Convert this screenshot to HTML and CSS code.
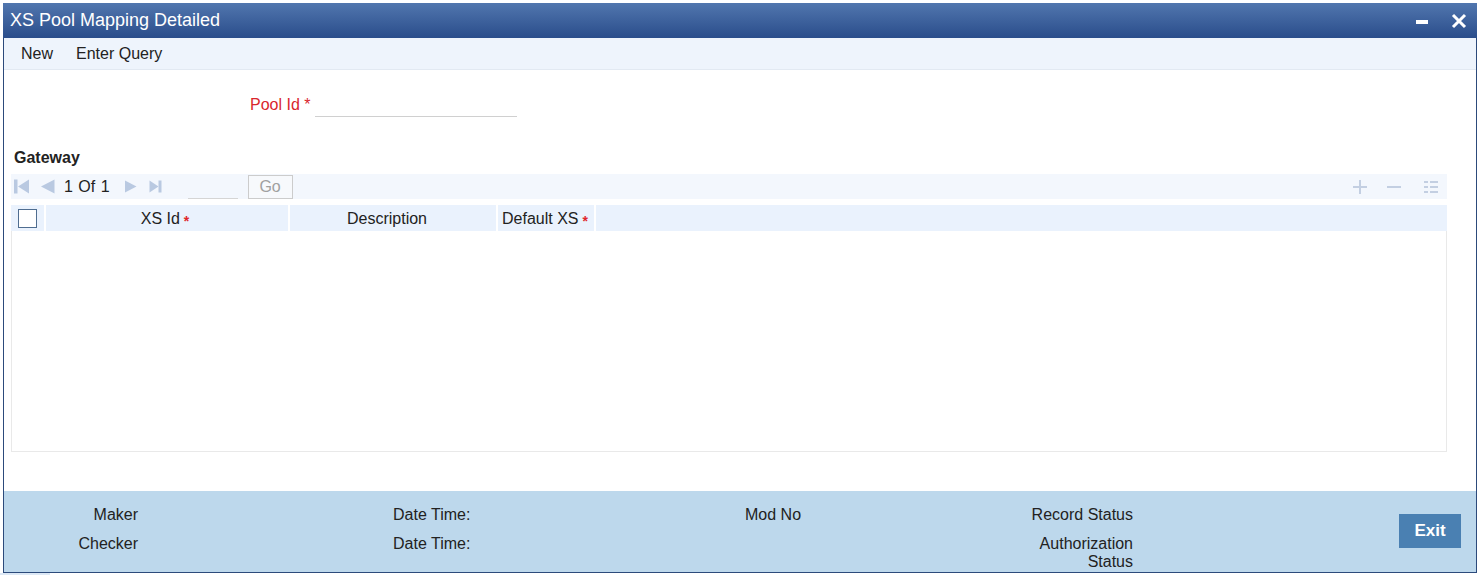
FILE: index.html
```html
<!DOCTYPE html>
<html>
<head>
<meta charset="utf-8">
<link rel="stylesheet" href="styles.css">
</head>
<body>
<div class="window">
  <div class="titlebar">
    <span class="title">XS Pool Mapping Detailed</span>
    <div class="winctl">
      <svg class="ic-min" width="14" height="14" viewBox="0 0 14 14"><rect x="1" y="6" width="12" height="4" fill="#fff"/></svg>
      <svg class="ic-close" width="16" height="16" viewBox="0 0 16 16"><path d="M2 2 L14 14 M14 2 L2 14" stroke="#fff" stroke-width="3"/></svg>
    </div>
  </div>
  <div class="toolbar">
    <span class="tb-item">New</span>
    <span class="tb-item">Enter Query</span>
  </div>
  <div class="main">
    <div class="pool-row">
      <label class="req-label">Pool Id <span class="star">*</span></label>
      <div class="line-input"></div>
    </div>
    <div class="section-title">Gateway</div>
    <div class="grid">
      <div class="pager">
        <div class="pager-left">
          <svg width="15" height="15" viewBox="0 0 15 15"><rect x="0" y="0.5" width="3.5" height="14" fill="#b9c9e1"/><path d="M15 0.5 L4 7.5 L15 14.5 Z" fill="#b9c9e1"/></svg>
          <svg class="gap-l" width="15" height="15" viewBox="0 0 15 15"><path d="M14.5 0.5 L1 7.5 L14.5 14.5 Z" fill="#b9c9e1"/></svg>
          <span class="pg-text">1 Of 1</span>
          <svg class="gap-r" width="13" height="15" viewBox="0 0 13 15"><path d="M1 1.5 L12.5 7.5 L1 13.5 Z" fill="#b9c9e1"/></svg>
          <svg class="gap-r2" width="13" height="15" viewBox="0 0 13 15"><path d="M0.5 1.5 L9.5 7.5 L0.5 13.5 Z" fill="#b9c9e1"/><rect x="9.5" y="1.5" width="3" height="12" fill="#b9c9e1"/></svg>
          <div class="pg-input"></div>
          <button class="go">Go</button>
        </div>
        <div class="pager-right">
          <svg width="16" height="16" viewBox="0 0 16 16"><path d="M8 1 V15 M1 8 H15" stroke="#c3cfe2" stroke-width="2"/></svg>
          <svg width="16" height="16" viewBox="0 0 16 16"><path d="M1 8 H15" stroke="#c3cfe2" stroke-width="2"/></svg>
          <svg class="ic-list" width="16" height="16" viewBox="0 0 16 16"><g fill="#c3cfe2"><rect x="1" y="2" width="4" height="2"/><rect x="7" y="2" width="8" height="2"/><rect x="1" y="7" width="4" height="2"/><rect x="7" y="7" width="8" height="2"/><rect x="1" y="12" width="4" height="2"/><rect x="7" y="12" width="8" height="2"/></g></svg>
        </div>
      </div>
      <div class="thead">
        <div class="th th-check"><span class="checkbox"></span></div>
        <div class="th th-id">XS Id <span class="hstar">*</span></div>
        <div class="th th-desc">Description</div>
        <div class="th th-def">Default XS <span class="hstar">*</span></div>
        <div class="th th-rest"></div>
      </div>
      <div class="tbody"></div>
    </div>
  </div>
  <div class="footer">
    <span class="f-lbl r1 c1">Maker</span>
    <span class="f-lbl r1 c3">Date Time:</span>
    <span class="f-lbl r1 c4">Mod No</span>
    <span class="f-lbl r1 c5 right">Record Status</span>
    <span class="f-lbl r2 c1">Checker</span>
    <span class="f-lbl r2 c3">Date Time:</span>
    <span class="f-lbl r2 c5 right">Authorization<br>Status</span>
    <div class="c6 exit-cell"><button class="exit">Exit</button></div>
  </div>
</div>
<div class="tab-stub"></div>
</body>
</html>
```

FILE: styles.css
```css
* { box-sizing: border-box; }
html, body {
  margin: 0;
  padding: 0;
  background: #fff;
  font-family: "Liberation Sans", Arial, sans-serif;
  color: #222;
}
.window {
  margin: 3px 0 0 3px;
  width: 1474px;
  height: 570px;
  border: 1px solid #2c4a7b;
  border-top: none;
  display: flex;
  flex-direction: column;
  background: #fff;
}
.titlebar {
  height: 35px;
  flex: none;
  background: linear-gradient(#5176ae, #2a4d8b);
  display: flex;
  align-items: center;
  justify-content: space-between;
  padding: 0 10px 0 7px;
  margin: 0 -1px;
}
.title {
  color: #fff;
  font-size: 18px;
}
.winctl {
  display: flex;
  align-items: center;
  gap: 22px;
}
.ic-min { margin-top: 1px; }
.toolbar {
  height: 32px;
  flex: none;
  background: #eef4fc;
  border-bottom: 1px solid #e2e9f2;
  display: flex;
  align-items: center;
  padding-left: 17px;
  gap: 23px;
  font-size: 16px;
  color: #222;
}
.main {
  flex: 1;
  padding: 24px 0 0 7px;
}
.pool-row {
  display: flex;
  align-items: flex-end;
  height: 23px;
  padding-left: 239px;
}
.req-label {
  color: #d9262c;
  font-size: 16px;
  line-height: 20px;
  margin-bottom: 2px;
}
.star { color: #d9262c; }
.line-input {
  width: 202px;
  height: 1px;
  background: #d0d0d0;
  margin-left: 4px;
}
.section-title {
  font-weight: bold;
  font-size: 16px;
  line-height: 20px;
  margin-top: 31px;
  padding-left: 3px;
}
.grid {
  width: 1436px;
  margin-top: 6px;
}
.pager {
  height: 25px;
  background: #f3f7fd;
  display: flex;
  justify-content: space-between;
  align-items: center;
}
.pager-left {
  display: flex;
  align-items: center;
  padding-left: 3px;
}
.gap-l { margin-left: 11px; }
.pg-text {
  font-size: 16px;
  margin-left: 9px;
  color: #222;
  word-spacing: 1px;
}
.gap-r { margin-left: 14px; }
.gap-r2 { margin-left: 12px; }
.pg-input {
  width: 50px;
  height: 24px;
  border-bottom: 1px solid #d5d5d5;
  margin-left: 26px;
}
.go {
  margin-left: 10px;
  width: 45px;
  height: 24px;
  border: 1px solid #ccc;
  background: #f7f9fc;
  color: #a0a0a0;
  font-family: "Liberation Sans", Arial, sans-serif;
  font-size: 16px;
  padding: 0;
}
.pager-right {
  display: flex;
  align-items: center;
  gap: 18px;
  padding-right: 8px;
}
.pager-right .ic-list { margin-left: 3px; }
.thead {
  margin-top: 6px;
  height: 26px;
  background: #eaf2fd;
  display: flex;
  font-size: 16px;
  color: #222;
}
.th {
  display: flex;
  align-items: center;
  justify-content: center;
  border-right: 2px solid #fff;
  padding-top: 1px;
}
.th-check { width: 35px; justify-content: flex-start; padding-left: 7px; padding-top: 0; }
.th-id { width: 244px; padding-right: 4px; }
.th-desc { width: 208px; padding-left: 4px; padding-right: 16px; }
.th-def { width: 98px; padding-right: 2px; }
.th-rest { flex: 1; border-right: none; }
.checkbox {
  width: 19px;
  height: 19px;
  background: #fff;
  border: 1px solid #4f6d90;
}
.hstar {
  color: #e0262c;
  font-size: 14px;
  font-weight: bold;
  margin-left: 4px;
  margin-top: 4px;
}
.tbody {
  height: 221px;
  border: 1px solid #e9e9e9;
  border-top: none;
}
.footer {
  height: 81px;
  flex: none;
  background: #bdd8ec;
  display: grid;
  grid-template-columns: 134px 255px 352px 155px 233px 1fr;
  grid-template-rows: 29px auto;
  padding-top: 15px;
  font-size: 16px;
  color: #222;
  line-height: 18px;
}
.f-lbl { white-space: nowrap; }
.r1 { grid-row: 1; }
.r2 { grid-row: 2; }
.c1 { grid-column: 1; text-align: right; }
.c3 { grid-column: 3; }
.c4 { grid-column: 4; }
.c5 { grid-column: 5; }
.right { text-align: right; }
.c6 { grid-column: 6; grid-row: 1 / span 2; }
.exit-cell {
  display: flex;
  justify-content: flex-end;
  align-items: flex-start;
  padding-right: 15px;
  padding-top: 8px;
}
.exit {
  width: 62px;
  height: 34px;
  border: none;
  background: #4a80b2;
  color: #fff;
  font-family: "Liberation Sans", Arial, sans-serif;
  font-weight: bold;
  font-size: 17px;
  padding: 0;
}
.tab-stub {
  width: 50px;
  height: 2px;
  background: #dce8f5;
}
```
